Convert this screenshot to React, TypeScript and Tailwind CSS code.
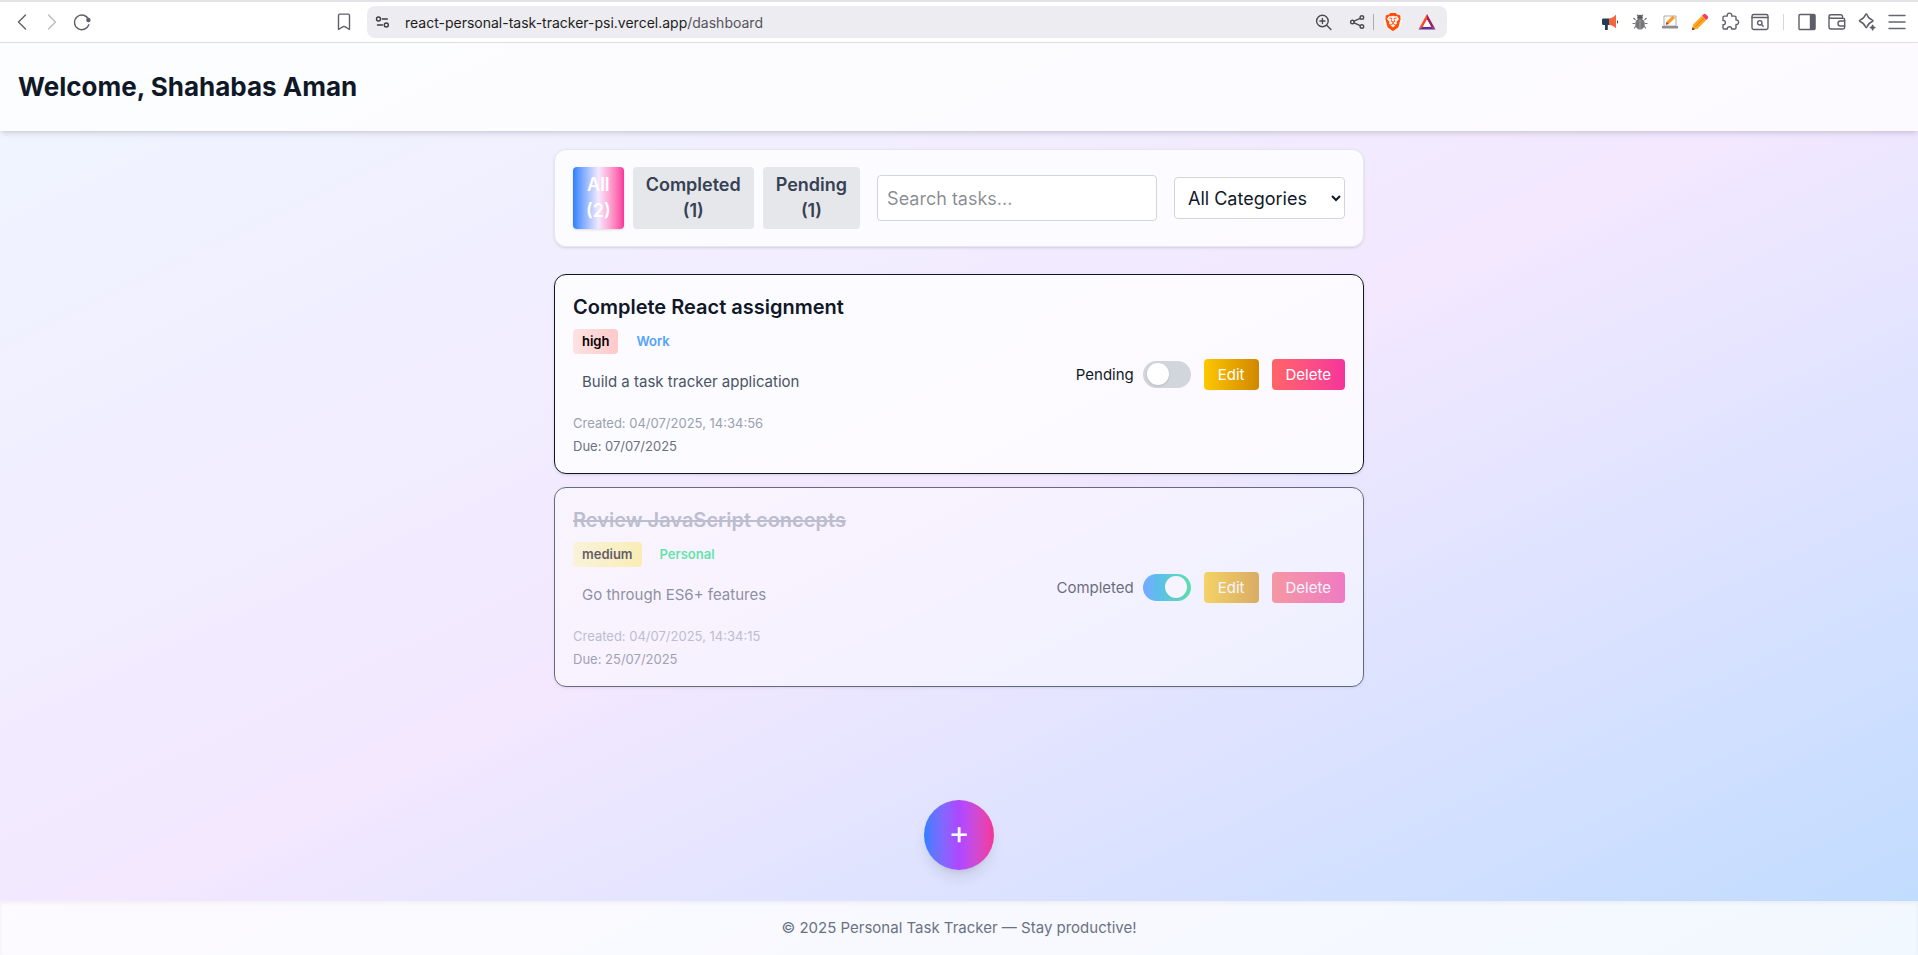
import React, { useState } from "react";
import { SiBrave } from "react-icons/si";

type Task = {
  id: number;
  title: string;
  priority: "high" | "medium";
  category: "Work" | "Personal";
  description: string;
  created: string;
  due: string;
  completed: boolean;
};

const initialTasks: Task[] = [
  {
    id: 1,
    title: "Complete React assignment",
    priority: "high",
    category: "Work",
    description: "Build a task tracker application",
    created: "04/07/2025, 14:34:56",
    due: "07/07/2025",
    completed: false,
  },
  {
    id: 2,
    title: "Review JavaScript concepts",
    priority: "medium",
    category: "Personal",
    description: "Go through ES6+ features",
    created: "04/07/2025, 14:34:15",
    due: "25/07/2025",
    completed: true,
  },
];

const priorityClass = {
  high: "from-red-100 to-red-200",
  medium: "from-yellow-100 to-yellow-200",
};

const categoryClass = {
  Work: "text-blue-400",
  Personal: "text-green-400",
};

function Icon({ children, className = "text-[#5f6067]" }: { children: React.ReactNode; className?: string }) {
  return (
    <svg
      viewBox="0 0 20 20"
      className={`size-5 ${className}`}
      fill="none"
      stroke="currentColor"
      strokeWidth="1.4"
      strokeLinecap="round"
      strokeLinejoin="round"
      aria-hidden="true"
    >
      {children}
    </svg>
  );
}

function ToolButton({ label, children }: { label: string; children: React.ReactNode }) {
  return (
    <button type="button" aria-label={label} className="flex w-[30px] shrink-0 items-center justify-center">
      {children}
    </button>
  );
}

function BrowserBar() {
  return (
    <div className="flex h-[43px] items-center border-t-2 border-b border-t-[#e3e2e8] border-b-[#dfdfe2] bg-white">
      <div className="flex w-[367px] shrink-0 items-center justify-between pr-2 pl-[7px]">
        <div className="flex">
          <ToolButton label="Back">
            <Icon>
              <path d="M13.5 3 6.5 10l7 7" />
            </Icon>
          </ToolButton>
          <ToolButton label="Forward">
            <Icon className="text-[#bcbcc0]">
              <path d="M6.5 3l7 7-7 7" />
            </Icon>
          </ToolButton>
          <ToolButton label="Reload">
            <Icon>
              <path d="M16.6 7.6A7.3 7.3 0 1 0 16.8 12.6" />
              <circle cx="16.4" cy="8" r="1.5" fill="currentColor" />
            </Icon>
          </ToolButton>
        </div>
        <ToolButton label="Bookmark">
          <Icon>
            <path d="M4.5 3.4c0-.8.5-1.3 1.3-1.3h8.4c.8 0 1.3.5 1.3 1.3v14.1L10.800 14.600c-.5-.3-1.100-.3-1.600 0L4.500 17.500z" />
          </Icon>
        </ToolButton>
      </div>

      <div className="flex h-8 min-w-0 flex-1 items-center rounded-lg bg-[#edecf1] pr-[5px]">
        <ToolButton label="Site settings">
          <Icon className="text-[#3b3b42]">
            <circle cx="6.5" cy="7" r="2" />
            <path d="M10.3 7h5" />
            <circle cx="14.3" cy="13" r="2" />
            <path d="M5.5 13h5" />
          </Icon>
        </ToolButton>
        <div className="min-w-0 flex-1 truncate pl-2 text-[14px] text-[#1d1d22]">
          react-personal-task-tracker-psi.vercel.app<span className="text-[#55555c]">/dashboard</span>
        </div>
        <ToolButton label="Zoom">
          <Icon className="text-[#4a4a52]">
            <circle cx="8.4" cy="9" r="5.8" />
            <path d="M12.7 13.300l4.200 4.200M5.900 9h5M8.400 6.500v5" />
          </Icon>
        </ToolButton>
        <div className="ml-1 flex items-center">
          <ToolButton label="Share">
            <Icon className="text-[#4a4a52]">
              <circle cx="4.4" cy="10" r="1.8" />
              <circle cx="13.9" cy="5.5" r="1.8" />
              <circle cx="13.9" cy="14.5" r="1.8" />
              <path d="M6.100 9.200l6-2.900M6.100 10.800l6 2.900" />
            </Icon>
          </ToolButton>
          <div className="h-4 w-px bg-[#aaaab0]" />
        </div>
        <div className="ml-1 flex items-center gap-1">
          <ToolButton label="Brave Shields">
            <span className="flex rounded-full bg-[#fff4ef]">
              <SiBrave className="size-[18px] text-[#ff4d0a]" />
            </span>
          </ToolButton>
          <ToolButton label="Brave Rewards">
            <svg viewBox="0 0 18 18" className="size-[18px]" aria-hidden="true">
              <path d="M9 1 0.500 16.500 5 13.800 9 6.500z" fill="#ff4724" />
              <path d="M9 1l8.500 15.500L13 13.800 9 6.500z" fill="#9e1f63" />
              <path d="M.5 16.500h17L13 13.800H5z" fill="#662d91" />
              <path d="M9 6.500l4 7.300H5z" fill="#fff" />
            </svg>
          </ToolButton>
        </div>
      </div>

      <div className="flex w-[471px] shrink-0 items-center justify-end pr-[6px]">
        <ToolButton label="Announcements">
          <svg viewBox="0 0 18 18" className="size-[18px]" aria-hidden="true">
            <path d="M2 5.500h6v6.500H6.800V17H4v-5H2A1.500 1.500 0 0 1 1 10.500V7a1.500 1.500 0 0 1 1-1.500z" fill="#263c55" />
            <path d="M8 5.500c3-.4 5-1.800 7-4v14c-2-2.200-4-3.300-7-3.500z" fill="#f4663c" />
            <path d="M16 7.200a2 2 0 0 1 0 3.600z" fill="#263c55" />
          </svg>
        </ToolButton>
        <ToolButton label="Debugger">
          <svg viewBox="0 0 18 18" className="size-[18px]" fill="none" aria-hidden="true">
            <path d="M4.500 7 2.500 5M4.200 10.500H1.500M5 13l-2 2.500M13.500 7l2-2M13.800 10.500h2.700M13 13l2 2.500M7 3 6 1.500M11 3l1-1.500" stroke="#77777a" strokeWidth="1.200" />
            <circle cx="9" cy="4.500" r="2.700" fill="#5c5c60" />
            <ellipse cx="9" cy="11" rx="4.800" ry="5.500" fill="#77777a" />
            <path d="M9 6.500v9.500" stroke="#a4a4a7" />
          </svg>
        </ToolButton>
        <ToolButton label="Screen editor">
          <svg viewBox="0 0 18 18" className="size-[18px]" aria-hidden="true">
            <path d="M3 3h12v10H3z" fill="#fff" stroke="#aaaaae" />
            <path d="M1 13h16v2.500H1z" fill="#8d8d92" />
            <path d="M5.500 8.800 11.800 2.600l2.300 2.300-6.300 6.200-2.900.7z" fill="#ff9c25" />
            <path d="M5.500 8.800l2.300 2.300-2.900.7z" fill="#7a513a" />
          </svg>
        </ToolButton>
        <ToolButton label="Pencil">
          <svg viewBox="0 0 18 18" className="size-[18px]" aria-hidden="true">
            <path d="M2.200 11.500 11 2.700l4.300 4.300-8.800 8.800L1 17z" fill="#ffa51f" />
            <path d="M4.400 13.700l8.800-8.800" stroke="#e97b12" />
            <path d="M11 2.700l1.300-1.300c.9-.9 1.900-.9 2.700 0L16.600 3c.9.900.9 1.900 0 2.700L15.300 7z" fill="#f83c69" />
            <path d="M1.600 14.300 3.700 16.400 1 17z" fill="#4c2b24" />
          </svg>
        </ToolButton>
        <ToolButton label="Extensions">
          <Icon>
            <path d="M3 5.300c0-.7.500-1.200 1.200-1.200h3.100c-.4-2 .7-3 2.200-3s2.600 1 2.200 3h3.100c.7 0 1.200.5 1.200 1.200v2.800c1.700-.2 2.600.8 2.600 2.200s-.9 2.400-2.600 2.200v3.300c0 .7-.5 1.200-1.200 1.200h-3.200c.2-1.500-.8-2.300-2.100-2.300s-2.300.8-2.100 2.300H4.200c-.7 0-1.200-.5-1.200-1.200v-3.100c1.600.2 2.400-.8 2.400-2.100S4.600 8.300 3 8.500z" />
          </Icon>
        </ToolButton>
        <ToolButton label="Search page">
          <Icon>
            <rect x="2" y="2.500" width="16" height="15" rx="1.700" />
            <path d="M2 5.500h16" />
            <circle cx="9.800" cy="10.800" r="2.200" />
            <path d="M11.500 12.500l1.700 1.700" />
          </Icon>
        </ToolButton>
        <div className="mx-2 h-4 w-px bg-[#d5d5da]" />
        <ToolButton label="Side panel">
          <Icon>
            <rect x="2" y="2.500" width="16" height="15" rx="1" />
            <path d="M13.500 3h4v14h-4z" fill="currentColor" />
          </Icon>
        </ToolButton>
        <ToolButton label="Wallet">
          <Icon>
            <path d="M15.500 6V4.500c0-1-.7-1.700-1.700-1.700H4C2.800 2.800 2 3.500 2 4.500S2.800 6.200 4 6.200h12c1 0 1.700.7 1.700 1.700v7.400c0 1-.7 1.700-1.700 1.700H4c-1.200 0-2-.8-2-2V4.500" />
            <path d="M17.700 9h-4.200a2.500 2.500 0 0 0 0 5h4.200" />
          </Icon>
        </ToolButton>
        <ToolButton label="Leo AI">
          <Icon>
            <path d="M8.600 2.600c.3-.8 1-.8 1.300 0 1.100 3.100 2.300 4.400 5.500 5.600.8.300.8 1 0 1.300-3.200 1.200-4.400 2.400-5.500 5.600-.3.800-1 .8-1.300 0-1.200-3.200-2.400-4.400-5.600-5.600-.8-.3-.8-1 0-1.300C6.200 7 7.400 5.700 8.600 2.600z" />
            <path d="M15.600 13.300l.6 1.700 1.700.6-1.700.6-.6 1.700-.6-1.700-1.700-.6 1.700-.6z" fill="currentColor" />
          </Icon>
        </ToolButton>
        <ToolButton label="Menu">
          <Icon className="text-[#66676d]">
            <path d="M2 3.500h16M2 10h16M2 16.500h16" />
          </Icon>
        </ToolButton>
      </div>
    </div>
  );
}

function TaskCard({ task, onToggle }: { task: Task; onToggle: () => void }) {
  return (
    <li
      className={`flex items-center justify-between rounded-xl border border-gray-900 bg-white/80 p-[18px] shadow-sm ${
        task.completed ? "opacity-60" : ""
      }`}
    >
      <div className="flex min-w-0 flex-col">
        <h2
          className={`text-[20px] leading-7 font-semibold ${
            task.completed ? "text-gray-400 line-through" : "text-gray-900"
          }`}
        >
          {task.title}
        </h2>
        <div className="mt-2 flex gap-[9px] text-[13px] leading-[17px] font-semibold">
          <span className={`rounded bg-linear-to-r px-[9px] py-1 text-black ${priorityClass[task.priority]}`}>
            {task.priority}
          </span>
          <span className={`px-[9px] py-1 ${categoryClass[task.category]}`}>{task.category}</span>
        </div>
        <p className="mt-[7px] p-[9px] pb-5 text-[15px] leading-6 text-gray-600">{task.description}</p>
        <p className="text-[13px] leading-[18px] text-gray-400">Created: {task.created}</p>
        <p className="mt-[5px] text-[13px] leading-[18px] text-gray-500">Due: {task.due}</p>
      </div>
      <div className="flex shrink-0 items-center gap-[13px] text-[15px] leading-[23px]">
        <label className="flex items-center gap-[9px] text-gray-900">
          {task.completed ? "Completed" : "Pending"}
          <input
            type="checkbox"
            checked={task.completed}
            onChange={onToggle}
            className="flex h-[27px] w-12 appearance-none items-center rounded-full bg-gray-300 px-1 before:size-[22px] before:rounded-full before:bg-white before:shadow-sm before:content-[''] checked:justify-end checked:bg-linear-to-r checked:from-blue-500 checked:to-green-400"
          />
        </label>
        <button
          type="button"
          className="rounded bg-linear-to-r from-yellow-400 to-yellow-600 px-[14px] py-1 text-white"
        >
          Edit
        </button>
        <button type="button" className="rounded bg-linear-to-r from-red-400 to-pink-500 px-[14px] py-1 text-white">
          Delete
        </button>
      </div>
    </li>
  );
}

export default function App() {
  const [tasks, setTasks] = useState(initialTasks);
  const [filter, setFilter] = useState("All");
  const done = tasks.filter((t) => t.completed).length;
  const filters = [
    { name: "All", count: tasks.length },
    { name: "Completed", count: done },
    { name: "Pending", count: tasks.length - done },
  ];
  const visible = tasks.filter((t) => filter === "All" || t.completed === (filter === "Completed"));
  const toggle = (id: number) =>
    setTasks((list) => list.map((t) => (t.id === id ? { ...t, completed: !t.completed } : t)));

  return (
    <div className="flex min-h-screen flex-col font-['Inter',sans-serif]">
      <BrowserBar />
      <div className="flex flex-1 flex-col bg-linear-to-br from-blue-50 via-purple-100 to-blue-200 text-gray-900">
        <header className="flex h-[88px] items-center bg-white/80 px-[18px] pb-0.5 shadow-md">
          <h1 className="text-[26px] font-bold">Welcome, Shahabas Aman</h1>
        </header>

        <main className="mx-auto flex w-full max-w-[810px] flex-1 flex-col pt-[18px]">
          <section className="flex items-center gap-[17px] rounded-xl border border-gray-200 bg-white/80 px-[18px] py-[17px] text-[18px] shadow-sm">
            <div className="flex gap-[9px]">
              {filters.map((f) => (
                <button
                  key={f.name}
                  type="button"
                  onClick={() => setFilter(f.name)}
                  className={`flex flex-col items-center rounded px-[13px] py-[5px] leading-[26px] font-semibold ${
                    filter === f.name
                      ? "bg-linear-to-r from-blue-500 via-purple-100 to-pink-500 text-white shadow-sm"
                      : "bg-gray-200 text-gray-700"
                  }`}
                >
                  <span>{f.name}</span>
                  <span>({f.count})</span>
                </button>
              ))}
            </div>
            <input
              type="text"
              aria-label="Search tasks"
              placeholder="Search tasks..."
              className="h-[46px] min-w-0 flex-1 rounded border border-gray-300 bg-white px-[9px] placeholder:text-gray-900/50"
            />
            <select
              aria-label="Category"
              className="h-[42px] w-[171px] rounded border border-gray-300 bg-white px-[9px]"
            >
              <option>All Categories</option>
              <option>Work</option>
              <option>Personal</option>
            </select>
          </section>

          <ul className="mt-[27px] flex flex-col gap-[13px]">
            {visible.map((t) => (
              <TaskCard key={t.id} task={t} onToggle={() => toggle(t.id)} />
            ))}
          </ul>

          <button
            type="button"
            aria-label="Add task"
            className="mt-auto mb-[31px] size-[70px] self-center rounded-full bg-linear-to-r from-blue-500 via-purple-500 to-pink-500 pb-1 text-[32px] text-white shadow-lg"
          >
            +
          </button>
        </main>

        <footer className="flex h-[54px] items-center justify-center bg-white/80 text-[15px] text-gray-500 inset-shadow-sm">
          © 2025 Personal Task Tracker — Stay productive!
        </footer>
      </div>
    </div>
  );
}
